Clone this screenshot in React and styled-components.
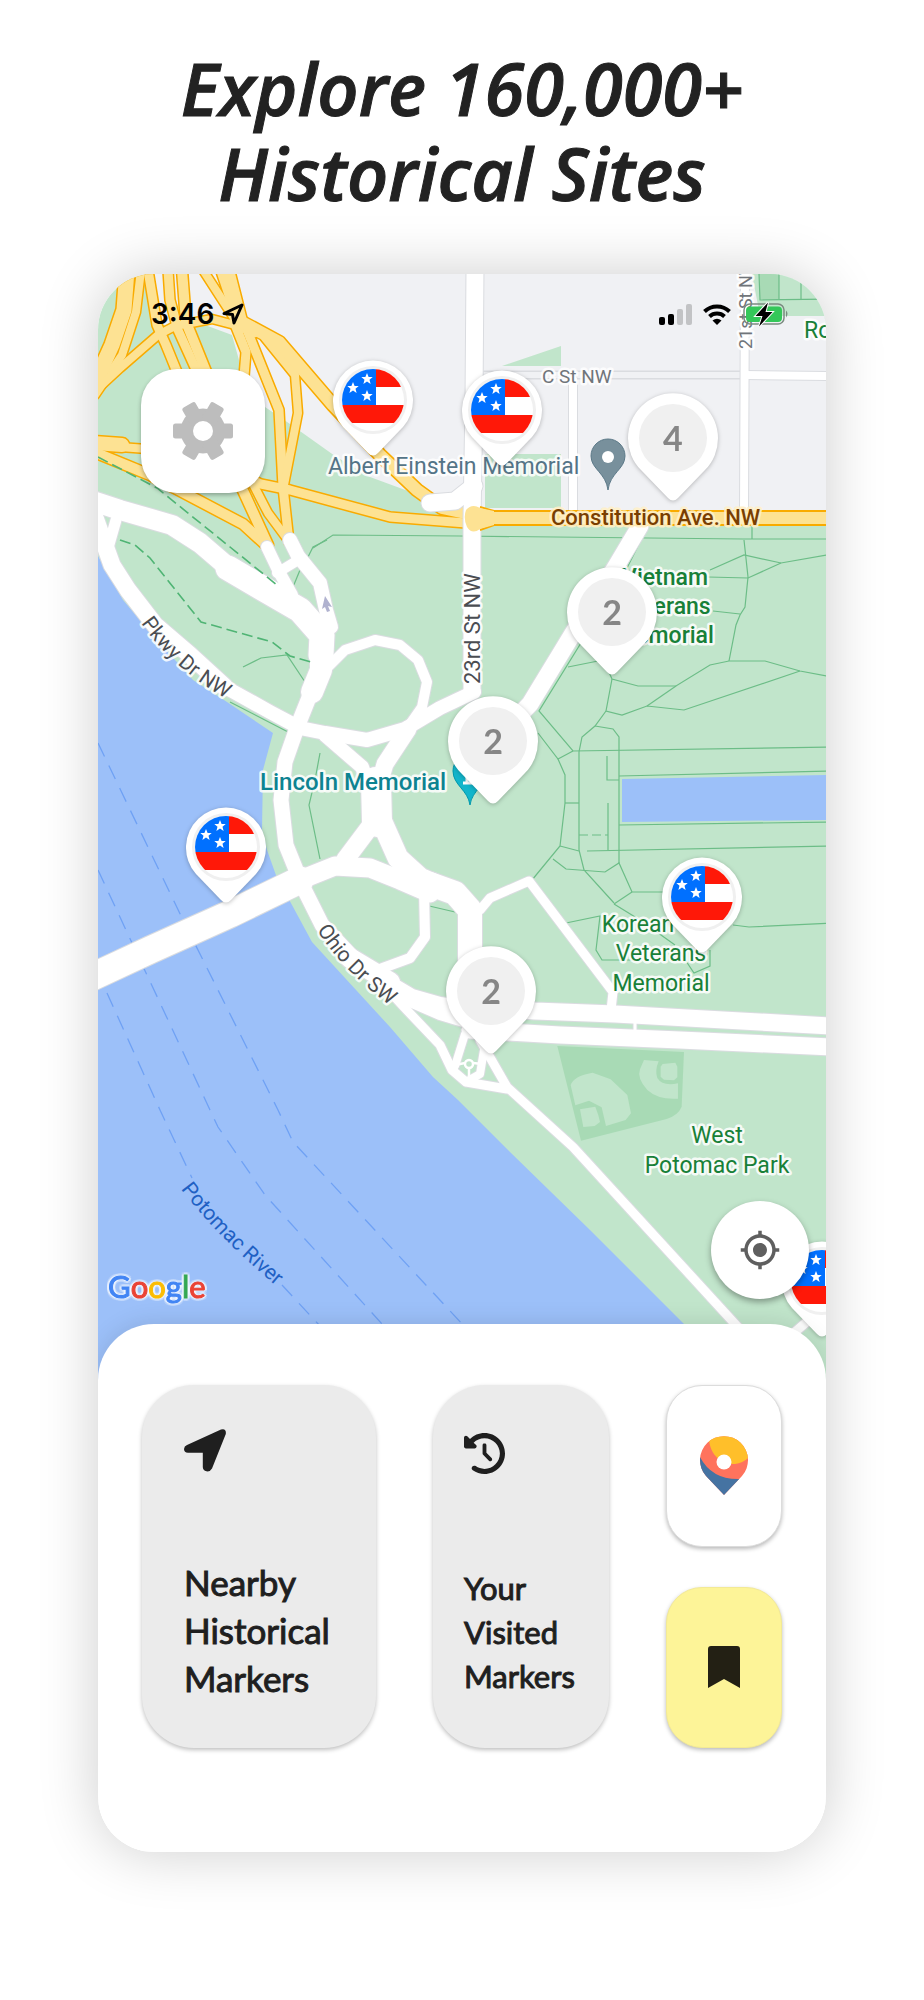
import React from "react";
import styled, { createGlobalStyle } from "styled-components";
import { MdMyLocation } from "react-icons/md";
import { FaClockRotateLeft } from "react-icons/fa6";

const GlobalStyle = createGlobalStyle`
  *, *::before, *::after { box-sizing: border-box; }
  body { margin: 0; background: #fff; }
  button { font: inherit; color: inherit; border: 0; padding: 0; cursor: pointer; }
`;

const Page = styled.main`
  display: flex;
  flex-direction: column;
  align-items: center;
  gap: 58px;
  padding: 46px 98px 148px;
  font-family: Lato, "Open Sans", sans-serif;
  color: #222;
`;

const Title = styled.h1`
  margin: 0;
  font-family: "Open Sans", Lato, sans-serif;
  font-size: 72px;
  line-height: 85px;
  font-weight: 600;
  font-style: italic;
  text-align: center;
  -webkit-text-stroke: 1px currentColor;
`;

const PhoneShadow = styled.div`
  width: 100%;
  border-radius: 56px;
  box-shadow: 0 0 60px rgba(0, 0, 0, 0.2);
`;

const Phone = styled.section`
  position: relative;
  border-radius: 56px;
  background: #fff;
  overflow: hidden;
`;

const MapArea = styled.div`
  position: relative;
  aspect-ratio: 728 / 1110;
`;

const MapSvg = styled.svg`
  display: block;
  width: 100%;
  height: 100%;
`;

const Label = styled.text`
  font-family: Roboto, "Liberation Sans", sans-serif;
  font-size: ${(p) => p.$size || 23}px;
  font-weight: ${(p) => p.$weight || 400};
  fill: ${(p) => p.$color};
  stroke: ${(p) => p.$halo || "rgba(255,255,255,0.85)"};
  stroke-width: ${(p) => (p.$halo === "none" ? 0 : 5)}px;
  stroke-linejoin: round;
  paint-order: stroke;
`;

const MapCredit = styled.div`
  position: absolute;
  left: 10px;
  bottom: 78px;
  display: flex;
  font-size: 31px;
  line-height: 40px;
  -webkit-text-stroke: 1px currentColor;
  color: #4285f4;
  filter: drop-shadow(2px 0 0 rgba(255, 255, 255, 0.5)) drop-shadow(-2px 0 0 rgba(255, 255, 255, 0.5))
    drop-shadow(0 2px 0 rgba(255, 255, 255, 0.5)) drop-shadow(0 -2px 0 rgba(255, 255, 255, 0.5));
`;

const Tint = styled.span`
  color: ${(p) => p.$color};
`;

const StatusBar = styled.div`
  position: absolute;
  inset: 0 0 auto 0;
  display: flex;
  justify-content: space-between;
  align-items: center;
  padding: 24px 36px 0 53px;
  height: 56px;
`;

const Clock = styled.div`
  display: flex;
  align-items: center;
  gap: 8px;
  font-family: Inter, sans-serif;
  font-size: 28px;
  line-height: 32px;
  font-weight: 600;
  color: #000;
`;

const SettingsButton = styled.button`
  position: absolute;
  left: 43px;
  top: 95px;
  width: 124px;
  height: 124px;
  display: grid;
  place-items: center;
  border-radius: 36px;
  background: #fff;
  box-shadow: 0 2px 4px rgba(0, 0, 0, 0.3);
`;

const LocateButton = styled.button`
  position: absolute;
  right: 17px;
  bottom: 85px;
  width: 98px;
  height: 98px;
  display: grid;
  place-items: center;
  border-radius: 50%;
  background: #fff;
  color: #5f5f5f;
  font-size: 42px;
  box-shadow: 0 3px 6px rgba(0, 0, 0, 0.35);
  svg { display: block; }
`;

const PinButton = styled.button`
  position: absolute;
  left: ${(p) => ((p.$x - 98) / 728) * 100}%;
  top: ${(p) => ((p.$y - 274) / 1110) * 100}%;
  transform: translate(-50%, -50%);
  width: 120px;
  height: 140px;
  background: none;
  filter: drop-shadow(0 1px 2px rgba(0, 0, 0, 0.25));
  svg { display: block; }
`;

const PinCount = styled.span`
  position: absolute;
  inset: 0;
  display: grid;
  place-items: center;
  font-size: 34px;
  line-height: 40px;
  font-weight: 700;
  color: #868686;
`;

const Sheet = styled.div`
  position: relative;
  margin-top: -60px;
  display: grid;
  grid-template-columns: 234fr 176fr 116fr;
  gap: 57px;
  padding: 61px 44px 104px;
  border-radius: 56px 56px 0 0;
  background: #fff;
  box-shadow: 0 0 24px rgba(0, 0, 0, 0.12);
`;

const Card = styled.button`
  display: flex;
  flex-direction: column;
  align-items: flex-start;
  justify-content: space-between;
  min-height: 363px;
  padding: ${(p) => (p.$wide ? "44px 16px 46px 42px" : "48px 12px 50px 31px")};
  border-radius: 52px;
  background: #ebebeb;
  box-shadow: 0 2px 4px rgba(0, 0, 0, 0.25);
  font-size: ${(p) => (p.$wide ? 35 : 31)}px;
  line-height: ${(p) => (p.$wide ? 48 : 44)}px;
  text-align: left;
  color: #1f1f1f;
  svg { display: block; }
`;

const Lines = styled.span`
  white-space: pre-line;
  -webkit-text-stroke: 1px currentColor;
`;

const Stack = styled.div`
  display: flex;
  flex-direction: column;
  justify-content: space-between;
  gap: 40px;
`;

const Tile = styled.button`
  flex: 1;
  display: grid;
  place-items: center;
  border-radius: 36px;
  background: ${(p) => p.$bg};
  border: 1px solid ${(p) => p.$line};
  box-shadow: 0 2px 4px rgba(0, 0, 0, 0.28);
`;

/* Highways: yellow with an orange edge. */
const highways = [
  [8, "141,270 136,312 122,355 95,395"],
  [15, "127,270 124,310 112,345 94,385"],
  [8, "94,392 120,368 158,335 175,326 212,319 235,325 255,333"],
  [9, "148,270 157,325 166,345 177,372"],
  [9, "168,270 170,300 178,330 198,374"],
  [10, "182,270 186,322 207,374"],
  [6, "219,270 234,315"],
  [8, "203,270 234,318"],
  [14, "227,270 241,325"],
  [9, "234,322 246,352 244,376"],
  [9, "245,325 279,410 283,487 289,542"],
  [8, "265,338 295,375 298,413 284,485"],
  [12, "238,320 279,342 333,405 380,455 417,490 442,508 470,514"],
  [8, "120,447 147,449 200,465 258,482"],
  [9, "256,483 290,490 390,517 466,523"],
  [14, "94,443 122,445"],
  [10, "94,452 150,475 243,524 266,545"],
  [10, "240,484 268,545"],
  [8, "253,484 268,513 288,540"],
];

/* Local streets: white with a grey edge. */
const streets = [
  [17, "475,268 474,400 472,520 472,690"],
  [8, "573,380 573,512"],
  [8, "745,268 744,512"],
  [8, "745,375 832,376"],
  [17, "430,503 455,501 474,486"],
  [17, "640,526 615,568 575,630 530,704 500,735"],
  [20, "90,500 120,510 172,525 200,543 235,573"],
  [25, "228,568 262,588 300,610 322,635 321,655"],
  [22, "321,640 321,670 312,692"],
  [15, "318,675 298,725 285,762 281,800 286,845 303,887 322,925 355,960"],
  [17, "94,515 112,565 128,590 155,625 190,655 225,687"],
  [14, "225,687 270,712 300,728 325,733 367,740 405,729 440,708 474,692"],
  [11, "108,548 116,520"],
  [12, "267,547 278,570 292,595"],
  [14, "290,540 298,556 320,583 326,610 331,627"],
  [10, "295,562 277,573"],
  [10, "320,675 345,650 375,640 400,645 418,660 427,682 422,707 408,727"],
  [17, "408,729 385,764 376,795"],
  [14, "325,735 362,767 372,795"],
  [30, "376,782 377,822"],
  [18, "372,824 345,860"],
  [21, "382,822 398,858 420,878 445,889"],
  [27, "90,978 150,950 230,914 300,880"],
  [19, "290,884 335,866 370,868 400,880 430,893"],
  [24, "430,884 455,893 470,910 470,980"],
  [10, "424,890 425,937 410,958 380,969"],
  [20, "350,958 390,982"],
  [14, "385,980 412,996 440,1004 470,1008"],
  [12, "385,980 410,1001 440,1014 480,1026"],
  [9, "370,970 403,1006 440,1045 452,1070 466,1082 507,1089"],
  [8, "465,1034 455,1066"],
  [8, "484,1050 480,1074 466,1082"],
  [9, "480,1040 507,1087 573,1147 790,1384"],
  [17, "460,1005 535,1011 615,1014 832,1026"],
  [17, "470,1030 560,1035 680,1040 832,1047"],
  [3, "635,1018 635,1036"],
  [9, "480,910 490,898 529,881 613,992 611,1010"],
  [9, "774,1350 830,1302"],
];

const paths = [
  "313,548 333,535 460,536 743,539 832,539",
  "327,540 313,547 308,557", "300,570 293,587",
  "752,524 752,539", "744,540 748,577 745,607 740,615 736,625 729,661",
  "710,570 744,555 781,563 832,554", "708,577 748,578 781,563",
  "713,611 740,614",
  "648,526 626,570 539,711 573,751 832,747", "568,667 598,661",
  "608,670 612,679 638,686 676,686 710,665 729,661 765,661 800,671 832,677",
  "612,679 606,711 622,715 647,706 684,710 800,671", "647,706 676,686",
  "606,711 595,726 582,737 579,752 579,850 584,870 614,903",
  "595,726 613,729 619,737 619,863",
  "573,751 558,759 538,733", "558,759 565,775 565,803 560,846 532,880",
  "565,803 579,803", "607,756 607,780 619,780", "608,803 608,850",
  "619,776 832,771", "619,825 832,822", "587,851 832,846",
  "560,846 579,851", "553,859 566,869 605,872 619,863 632,892 665,892", "632,892 614,904",
  "614,904 640,920 675,945", "566,923 600,916 596,950 602,960 640,960", "733,925 749,927 832,923",
  "710,950 710,966 694,973 680,952",
  "243,667 261,658 287,655 307,685", "320,753 315,780 309,805 320,859",
  "425,905 455,912", "230,702 290,733",
  "759,274 760,300 832,299", "779,274 779,299", "801,274 801,299",
];

const flagPins = [[373, 400], [502, 410], [226, 847], [702, 897], [822, 1281]];
const countPins = [[673, 438, 4], [612, 612, 2], [493, 741, 2], [491, 991, 2]];

const green = "#188038";

function Road({ list, edge, fill, extra }) {
  return (
    <g fill="none" strokeLinejoin="round" strokeLinecap="round">
      {list.map(([w, pts]) => <polyline key={"e" + pts} points={pts} stroke={edge} strokeWidth={w + extra} />)}
      {list.map(([w, pts]) => <polyline key={"f" + pts} points={pts} stroke={fill} strokeWidth={w} />)}
    </g>
  );
}

function StreetMap() {
  return (
    <MapSvg viewBox="98 274 728 1110" preserveAspectRatio="xMidYMin slice" role="img" aria-label="Map of West Potomac Park">
      <rect x="98" y="274" width="728" height="1110" fill="#c1e5cb" />
      <path fill="#f0f1f4" d="M142 274L158 325 205 325 232 335 244 378 265 407 290 424 335 456 370 477 408 491 440 510 826 510V274Z" />
      <path fill="#c1e5cb" d="M502 366L561 346V366Z M485 454H561V508H485Z M752 274H826V316H760Z" />
      <path fill="#a8dab5" d="M759 274H779V299H760Z" />
      <path fill="#9cc0f9" d="M98 556L123 600 157 640 193 680 227 702 273 733 263 770 262 830 267 850 277 878 292 905 312 942 390 1027 433 1077 458 1100 510 1152 590 1230 683 1323 745 1384H98Z M622 779L826 775V820L622 822Z" />

      <g transform="translate(440 1000) scale(0.3333)">
        <path fill="#a8dab5" d="M352 138L732 156 725 320Q715 345 680 357L423 422Z" />
        <g fill="#c1e5cb">
          <path d="M392 255Q400 228 458 218L512 238 562 285 573 340 557 360 498 378 485 322 447 302 406 316Z" />
          <path d="M420 328L466 320Q476 345 480 366L464 378 430 381Z" />
          <path d="M612 180L656 184Q644 212 652 234Q668 260 714 250V296Q655 300 622 270Q590 235 600 208Z" />
          <path d="M668 192L706 188 712 200V232L702 241 672 239 662 230V200Z" />
        </g>
      </g>

      <g fill="none" stroke="#6fa1f4" strokeWidth="1.3" strokeDasharray="15 10">
        <polyline points="98,743 183,920 278,1110 293,1142 465,1327" />
        <polyline points="98,870 210,1110 218,1127 265,1195 382,1324" />
        <polyline points="107,993 160,1110 192,1178" />
        <polyline points="282,1285 320,1326" />
      </g>

      <g fill="none" stroke="#6cbd87" strokeWidth="1.2">
        {paths.map((p) => <polyline key={p} points={p} />)}
        <polyline points="579,835 608,835" strokeDasharray="9 4" />
      </g>

      <polyline points="483,375 745,375" fill="none" stroke="#dadce0" strokeWidth="9" />
      <polyline points="483,375 745,375" fill="none" stroke="#f0f1f4" strokeWidth="6" />
      <Road list={highways} edge="#f9ab00" fill="#fde293" extra={3} />
      <Road list={streets} edge="#dadce0" fill="#fff" extra={2} />
      <path d="M484 508L494 511H826V525H494L484 529Z" fill="#fde293" />
      <path d="M480 507L494 511H826M480 530L494 525H826" fill="none" stroke="#f9ab00" strokeWidth="2" />
      <path d="M466 510Q472 503 480 508L494 511V525L480 529Q472 535 467 527Q463 518 466 510Z" fill="#fde293" />

      <g fill="none" stroke="#4fb474" strokeWidth="1.6" strokeDasharray="11 5">
        <polyline points="98,457 157,488 230,547 277,585" />
        <polyline points="120,540 135,545 150,558 201,622 272,642 290,656 311,662" />
      </g>
      <g fill="none" stroke="#fff" strokeWidth="2.5">
        <circle cx="469" cy="1064" r="4" />
        <path d="M469 1068V1080M465 1063L455 1065M473 1063L482 1064" />
      </g>
      <path d="M325 596L332 607 328 606 330 611 327 612 325 607 322 609Z" fill="#b0b2cf" />

      <path d="M608 490C606 473 591 469 591 456A17 17 0 0 1 625 456C625 469 610 473 608 490Z" fill="#78909c" stroke="#5d7a89" />
      <circle cx="608" cy="457" r="6" fill="#fff" />
      <path d="M470 805C468 790 453 785 453 771A17 17 0 0 1 487 771C487 785 472 790 470 805Z" fill="#12b5cb" stroke="#0097ab" />
      <path d="M463 783H476M467 777V783" stroke="#fff" strokeWidth="3" />

      <Label x="328" y="474" $color="#547487">Albert Einstein Memorial</Label>
      <Label x="542" y="383" $size={19} $color="#70757a">C St NW</Label>
      <Label x="551" y="525" $size={22} $weight={500} $color="#7a3e00" $halo="rgba(255,240,200,.9)">Constitution Ave. NW</Label>
      <Label x="260" y="790" $size={24} $weight={500} $color="#0d8391">Lincoln Memorial</Label>
      <g textAnchor="middle">
        <Label $weight={500} $color={green}>
          <tspan x="665" y="585">Vietnam</tspan>
          <tspan x="665" y="614">Veterans</tspan>
          <tspan x="665" y="643">Memorial</tspan>
        </Label>
        <Label $color={green}>
          <tspan x="661" y="932">Korean War</tspan>
          <tspan x="661" y="961">Veterans</tspan>
          <tspan x="661" y="991">Memorial</tspan>
        </Label>
        <Label $color={green}>
          <tspan x="717" y="1143">West</tspan>
          <tspan x="717" y="1173">Potomac Park</tspan>
        </Label>
      </g>
      <Label x="804" y="338" $color={green}>Ro</Label>
      <Label transform="translate(752 349) rotate(-90)" $size={18} $color="#70757a">21st St NW</Label>
      <Label transform="translate(480 684) rotate(-90)" $size={22} $color="#4a4d52">23rd St NW</Label>

      <path id="pkwy" fill="none" d="M141 623Q176 674 240 706" />
      <path id="ohio" fill="none" d="M317 930Q345 975 402 1014" />
      <path id="river" fill="none" d="M181 1189Q222 1243 290 1297" />
      <Label $size={21} $color="#4a4d52"><textPath href="#pkwy">Pkwy Dr NW</textPath></Label>
      <Label $size={21} $color="#4a4d52"><textPath href="#ohio">Ohio Dr SW</textPath></Label>
      <Label $size={21} $color="#1f60c4" $halo="none"><textPath href="#river">Potomac River</textPath></Label>
    </MapSvg>
  );
}

const STAR = "M0-6L1.6-2 5.7-1.9 2.5.8 3.6 4.9 0 2.5-3.6 4.9-2.5.8-5.7-1.9-1.6-2Z";

function FlagPin({ x, y }) {
  return (
    <PinButton $x={x} $y={y} aria-label="Historical marker">
      <svg width="120" height="140" viewBox="-60 -70 120 140" aria-hidden="true">
        <clipPath id={`flag-${x}`}><circle r="31" /></clipPath>
        <path d="M-30 27A40 40 0 1 1 30 27L5 53Q0 58-5 53Z" fill="#fff" />
        <circle r="34" fill="#f0f0f0" />
        <circle r="31" fill="#fff" />
        <g clipPath={`url(#flag-${x})`}>
          <path d="M-31-31H3V5H-31Z" fill="#0070ff" />
          <path d="M3-31H31V-13H3Z M-31 5H31V23H-31Z" fill="#ff1808" />
        </g>
        <g fill="#fff">
          <path d={STAR} transform="translate(-6 -21)" />
          <path d={STAR} transform="translate(-20 -12)" />
          <path d={STAR} transform="translate(-6 -4)" />
        </g>
      </svg>
    </PinButton>
  );
}

function CountPin({ x, y, count }) {
  return (
    <PinButton $x={x} $y={y} aria-label={`${count} markers`}>
      <svg width="120" height="140" viewBox="-60 -70 120 140" aria-hidden="true">
        <path d="M-32 32A45 45 0 1 1 32 32L5 60Q0 65-5 60Z" fill="#fff" />
        <circle r="34" fill="#f0f0f0" />
      </svg>
      <PinCount>{count}</PinCount>
    </PinButton>
  );
}

function Gear() {
  return (
    <svg width="60" height="60" viewBox="-30 -30 60 60" aria-hidden="true">
      <g fill="#bdbdbd">
        <circle r="22.5" />
        {[0, 60, 120].map((a) => (
          <rect key={a} transform={`rotate(${a})`} x="-30" y="-7.5" width="60" height="15" rx="2.5" />
        ))}
      </g>
      <circle r="10" fill="#fff" />
    </svg>
  );
}

function StatusIcons() {
  return (
    <svg width="132" height="28" viewBox="658 299 132 28" aria-hidden="true">
      <rect x="659" y="316" width="6" height="8" rx="2" />
      <rect x="668" y="313" width="6" height="11" rx="2" />
      <g fill="#c2c3c5">
        <rect x="677" y="308" width="6" height="16" rx="2" />
        <rect x="686" y="303" width="6" height="21" rx="2" />
      </g>
      <g fill="none" stroke="#000" strokeWidth="4">
        <path d="M704.500 310.500A18 18 0 0 1 729.500 310.500" />
        <path d="M709.500 315.500A11 11 0 0 1 724.500 315.500" />
      </g>
      <path d="M712.500 319.500Q717 316 721.500 319.500L717 324Z" />
      <rect x="744" y="303" width="40" height="20" rx="6" fill="none" stroke="#7b8a80" strokeWidth="1.500" />
      <rect x="746" y="305.500" width="36" height="15.500" rx="4" fill="#34c759" />
      <path d="M786 309.500Q789 312.500 786 316.500Z" fill="#7b8a80" />
      <path d="M768 301.500L755.500 315H762.500L759 325.500 772.500 311H765.500Z" stroke="#fff" strokeWidth="2" paintOrder="stroke" />
    </svg>
  );
}

function NearbyArrow() {
  return (
    <svg width="42" height="43" viewBox="0 0 42 43" fill="#1f1f1f" aria-hidden="true">
      <path d="M37 .5Q42.500-1 41.800 5L28 39.500Q26 43 22.500 42.300 18.800 41.500 18.800 38V23.800H4Q0 23.500 0 20 .2 17.200 3 16Z" />
    </svg>
  );
}

function LogoPin() {
  return (
    <svg width="48" height="59" viewBox="0 0 48 59" aria-hidden="true">
      <clipPath id="logo-shape"><path d="M24 59L6 40A24 24 0 1 1 42 40Z" /></clipPath>
      <g clipPath="url(#logo-shape)">
        <rect width="48" height="59" fill="#ff735d" />
        <path d="M9 3C10 20 22 28 35 28Q43 27 48 22V0H9Z" fill="#ffbf2a" />
        <path d="M0 21Q12 44 40 43H48V59H0Z" fill="#4573a2" />
      </g>
      <circle cx="24" cy="26" r="7.500" fill="#fff" />
    </svg>
  );
}

export default function App() {
  return (
    <>
      <GlobalStyle />
      <Page>
        <Title>Explore 160,000+<br />Historical Sites</Title>
        <PhoneShadow>
          <Phone>
            <MapArea>
              <StreetMap />
              <MapCredit>
                <Tint>G</Tint><Tint $color="#ea4335">o</Tint><Tint $color="#fbbc04">o</Tint><Tint>g</Tint><Tint $color="#34a853">l</Tint><Tint $color="#ea4335">e</Tint>
              </MapCredit>
              {flagPins.map(([x, y]) => <FlagPin key={x} x={x} y={y} />)}
              {countPins.map(([x, y, n]) => <CountPin key={x} x={x} y={y} count={n} />)}
              <StatusBar>
                <Clock>
                  3:46
                  <svg width="22" height="22" viewBox="0 0 22 22" fill="none" stroke="#000" strokeWidth="3" strokeLinejoin="round" aria-hidden="true">
                    <path d="M20 2L2 10.500 10.500 11.500 12 20Z" />
                  </svg>
                </Clock>
                <StatusIcons />
              </StatusBar>
              <SettingsButton aria-label="Settings"><Gear /></SettingsButton>
              <LocateButton aria-label="My location"><MdMyLocation /></LocateButton>
            </MapArea>
            <Sheet>
              <Card $wide>
                <NearbyArrow />
                <Lines>{"Nearby\nHistorical\nMarkers"}</Lines>
              </Card>
              <Card>
                <FaClockRotateLeft size={41} />
                <Lines>{"Your\nVisited\nMarkers"}</Lines>
              </Card>
              <Stack>
                <Tile $bg="#fff" $line="#dcdcdc" aria-label="Trips"><LogoPin /></Tile>
                <Tile $bg="#fdf498" $line="#f3ea95" aria-label="Bookmarks">
                  <svg width="32" height="42" viewBox="0 0 32 42" aria-hidden="true">
                    <path d="M3 0H29Q32 0 32 3V42L16 33 0 42V3Q0 0 3 0Z" fill="#232014" />
                  </svg>
                </Tile>
              </Stack>
            </Sheet>
          </Phone>
        </PhoneShadow>
      </Page>
    </>
  );
}
